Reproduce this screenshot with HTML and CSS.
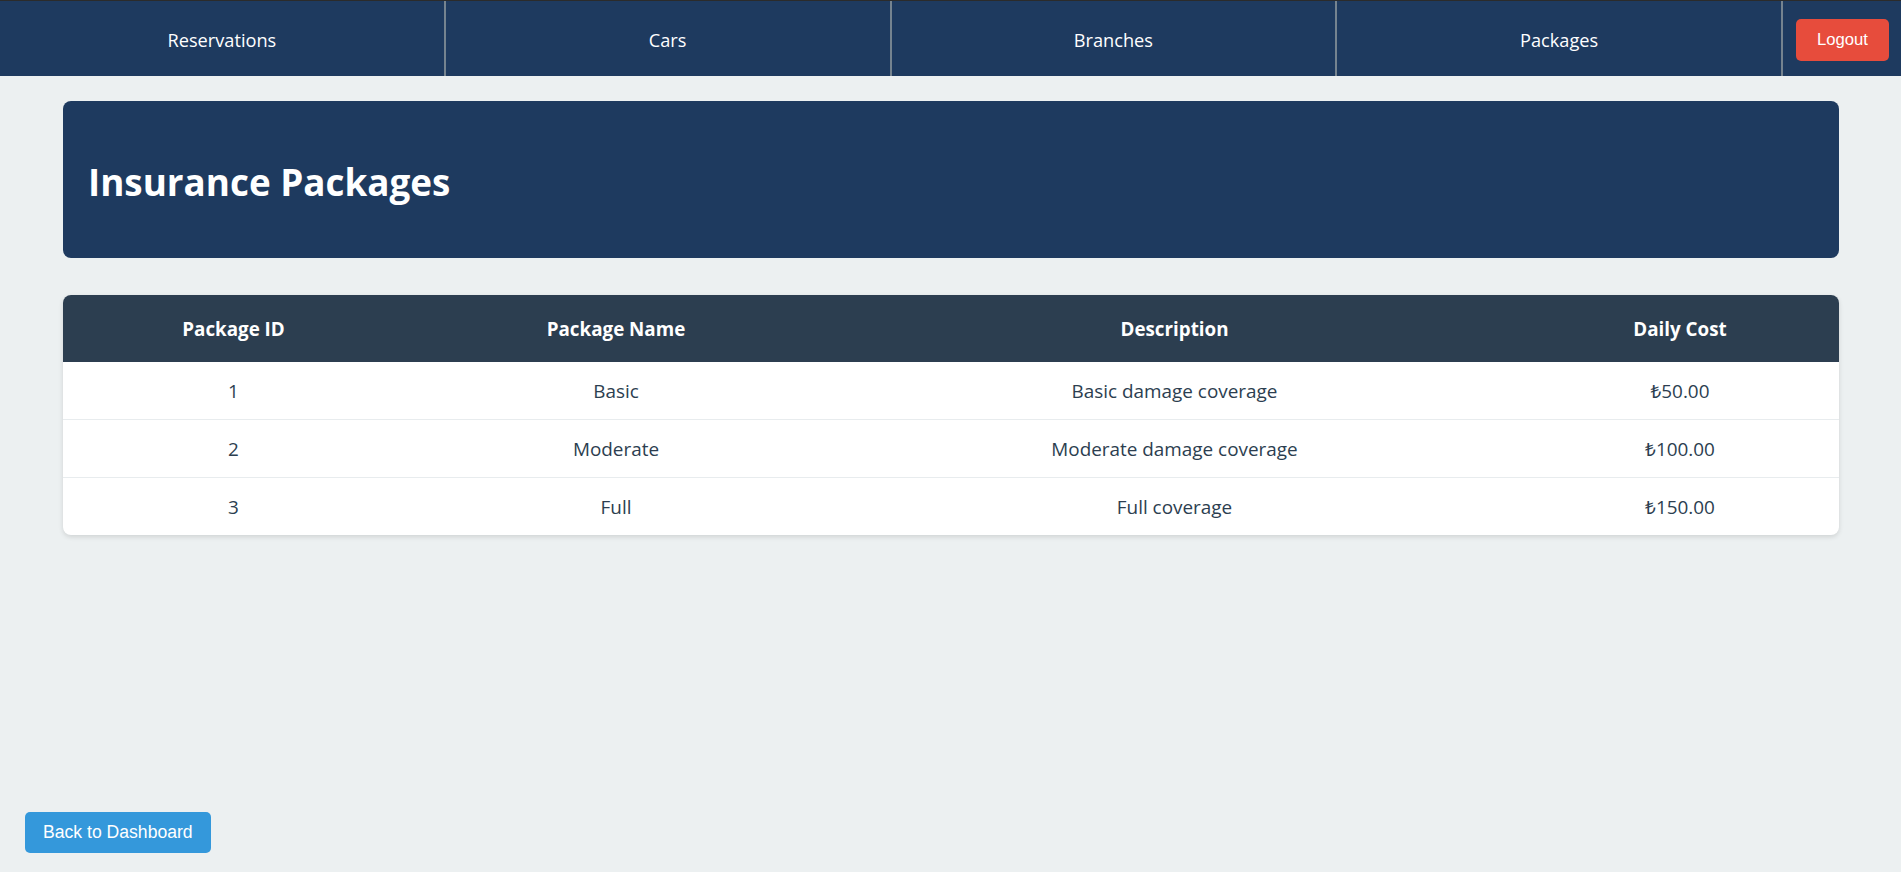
FILE: index.html
```html
<!DOCTYPE html>
<html lang="en">
<head>
<meta charset="utf-8">
<title>Insurance Packages</title>
<link rel="stylesheet" href="styles.css">
</head>
<body>
<nav class="topnav">
  <a class="nav-link" href="#">Reservations</a>
  <a class="nav-link" href="#">Cars</a>
  <a class="nav-link" href="#">Branches</a>
  <a class="nav-link" href="#">Packages</a>
  <div class="nav-actions">
    <button class="btn-logout" type="button">Logout</button>
  </div>
</nav>

<main class="content">
  <section class="page-header">
    <h1 class="page-title">Insurance Packages</h1>
  </section>

  <div class="table-card">
    <table class="packages">
      <thead>
        <tr>
          <th class="col-id">Package ID</th>
          <th class="col-name">Package Name</th>
          <th class="col-desc">Description</th>
          <th class="col-cost">Daily Cost</th>
        </tr>
      </thead>
      <tbody>
        <tr><td>1</td><td>Basic</td><td>Basic damage coverage</td><td>₺50.00</td></tr>
        <tr><td>2</td><td>Moderate</td><td>Moderate damage coverage</td><td>₺100.00</td></tr>
        <tr><td>3</td><td>Full</td><td>Full coverage</td><td>₺150.00</td></tr>
      </tbody>
    </table>
  </div>
</main>

<button class="btn-back" type="button">Back to Dashboard</button>
</body>
</html>
```

FILE: styles.css
```css
* { box-sizing: border-box; }

html, body { height: 100%; }

body {
  margin: 0;
  background: #ecf0f1;
  font-family: "Open Sans", "Noto Sans", sans-serif;
  color: #2c3e50;
}

.topnav {
  display: flex;
  height: 76px;
  background: #1e3a5f;
  border-top: 1px solid #2b2b2b;
}

.nav-link {
  flex: 1 1 0;
  display: flex;
  align-items: center;
  justify-content: center;
  color: #ffffff;
  text-decoration: none;
  font-size: 18.2px;
  border-right: 2px solid #75838f;
  padding-top: 3px;
}

.nav-actions {
  width: 118px;
  display: flex;
  align-items: center;
  justify-content: center;
  padding-left: 1px;
}

.btn-logout {
  height: 42px;
  padding: 0 21px;
  background: #e74c3c;
  color: #ffffff;
  border: none;
  border-radius: 5px;
  font-family: "Liberation Sans", Arial, sans-serif;
  font-size: 16.67px;
  margin-top: 2px;
  cursor: pointer;
}

.content {
  padding: 25px 62px 0 63px;
}

.page-header {
  height: 157px;
  background: #1e3a5f;
  border-radius: 8px;
  display: flex;
  align-items: center;
  padding: 6px 25px 0;
}

.page-title {
  margin: 0;
  color: #ffffff;
  font-size: 36.8px;
  font-weight: 700;
  line-height: 1.2;
}

.table-card {
  margin-top: 37px;
  background: #ffffff;
  border-radius: 8px;
  overflow: hidden;
  box-shadow: 0 2px 5px rgba(0, 0, 0, 0.12);
}

.packages {
  width: 100%;
  border-collapse: collapse;
  table-layout: fixed;
  text-align: center;
}

.packages th {
  background: #2c3e50;
  color: #ffffff;
  font-weight: 700;
  font-size: 18.8px;
  line-height: 25px;
  padding: 22px 10px 20px;
}

.col-id { width: 341px; }
.col-name { width: 424px; }
.col-desc { width: 693px; }
.col-cost { width: 318px; }

.packages td {
  font-size: 18.9px;
  line-height: 25px;
  padding: 17px 10px 15px;
  color: #2c3e50;
  border-bottom: 1px solid #e8ecee;
}

.packages tbody tr:last-child td {
  border-bottom: none;
}

.btn-back {
  position: fixed;
  left: 25px;
  bottom: 19px;
  height: 41px;
  padding: 0 18px;
  background: #3498db;
  color: #ffffff;
  border: none;
  border-radius: 5px;
  font-family: "Liberation Sans", Arial, sans-serif;
  font-size: 17.6px;
  cursor: pointer;
}
```
